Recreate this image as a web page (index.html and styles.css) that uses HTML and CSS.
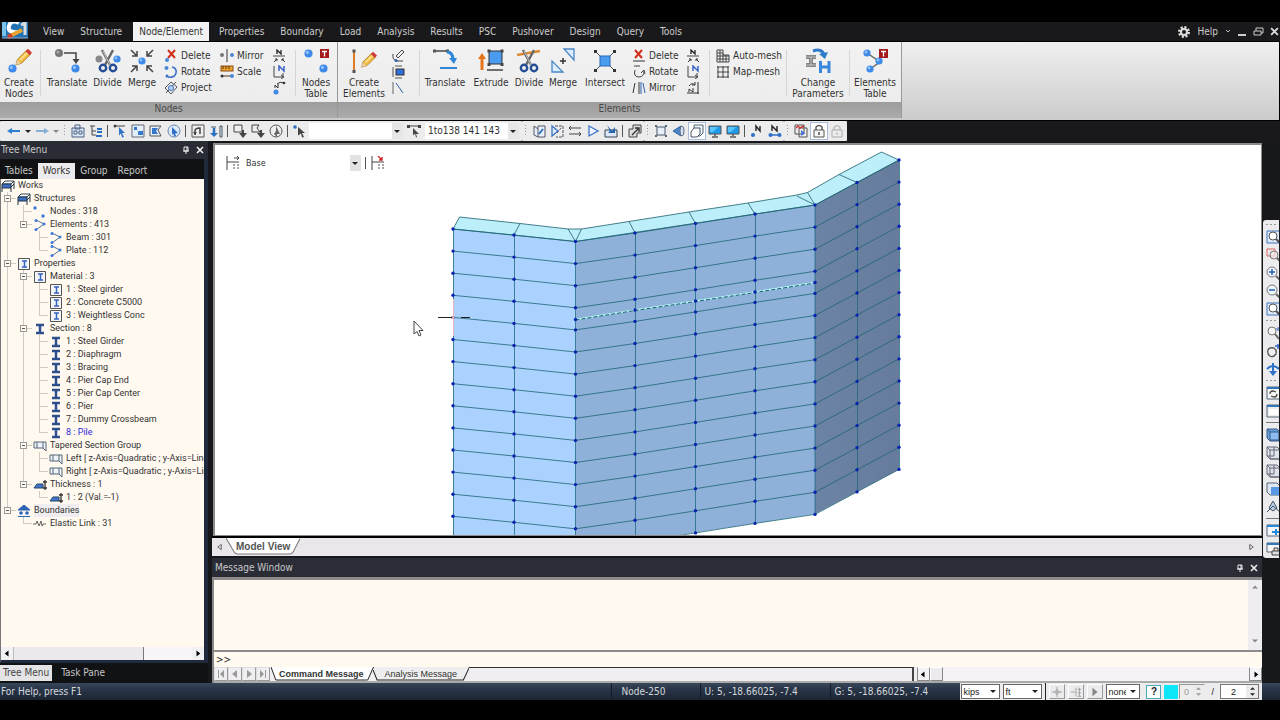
FILE: index.html
```html
<!DOCTYPE html>
<html lang="en">
<head>
<meta charset="utf-8">
<title>Model View</title>
<link rel="stylesheet" href="styles.css">
</head>
<body>
<svg class="defs" aria-hidden="true">
  <symbol id="pencil" viewBox="0 0 26 26"><path d="M8 14L19 3l5 5-11 11-7 2z" fill="#f0b93f" stroke="#a8752a"/><path d="M11 15L21 5" stroke="#ffe08a" stroke-width="2.500"/><path d="M18 4l3-3 5 5-3 3z" fill="#cf3b36"/><path d="M6 21l2-6 4 4z" fill="#e9d3a5"/></symbol>
  <symbol id="ball" viewBox="0 0 8 8"><circle cx="4" cy="4" r="3.6" fill="#3f8ae8"/><circle cx="3" cy="3" r="1.4" fill="#8fc2ff"/></symbol>
  <symbol id="create-n" viewBox="0 0 26 26"><use href="#pencil" x="5" y="0" width="21" height="21"/><use href="#ball" x="2" y="16" width="9" height="9"/></symbol>
  <symbol id="translate-n" viewBox="0 0 26 26"><circle cx="5" cy="5" r="4" fill="#777"/><circle cx="4" cy="4" r="1.5" fill="#aaa"/><path d="M10 5h12v7" fill="none" stroke="#444" stroke-width="1.500"/><path d="M18.500 11h7L22 16z" fill="#444"/><use href="#ball" x="17" y="16" width="9" height="9"/></symbol>
  <symbol id="scissors" viewBox="0 0 26 26"><path d="M7 2l8 15M18 2l-8 15" stroke="#666" stroke-width="2.4"/><path d="M8 3l7 14" stroke="#ccc"/><circle cx="8" cy="20" r="3.2" fill="none" stroke="#244f94" stroke-width="2.4"/><circle cx="18" cy="20" r="3.2" fill="none" stroke="#244f94" stroke-width="2.4"/></symbol>
  <symbol id="divide-n" viewBox="0 0 26 26"><circle cx="4" cy="11" r="3.5" fill="#888"/><use href="#ball" x="18" y="7" width="8" height="8"/><use href="#scissors" width="26" height="26"/></symbol>
  <symbol id="merge-n" viewBox="0 0 26 26"><g fill="none" stroke="#444" stroke-width="1.5"><path id="arr" d="M2 2l6 6M8 3v5H3"/><use href="#arr" transform="translate(26 0) scale(-1 1)"/><use href="#arr" transform="translate(0 26) scale(1 -1)"/><use href="#arr" transform="translate(26 26) scale(-1 -1)"/></g><use href="#ball" x="9" y="9" width="8" height="8"/></symbol>
  <symbol id="tbadge" viewBox="0 0 9 9"><rect width="9" height="9" fill="#a51b1b"/><path d="M2 2.5h5M4.500 2.500v5" stroke="#fff" stroke-width="1.300"/></symbol>
  <symbol id="table-n" viewBox="0 0 26 26"><use href="#ball" x="1" y="1" width="9" height="9"/><use href="#ball" x="16" y="16" width="9" height="9"/><use href="#tbadge" x="17" y="1" width="9" height="9"/></symbol>
  <symbol id="create-e" viewBox="0 0 26 26"><path d="M3 3v20" stroke="#de7c24" stroke-width="2"/><path d="M1.500 1.500h3v3h-3zM1.500 22h3v3h-3z" fill="#555"/><use href="#pencil" x="6" y="2" width="20" height="22"/></symbol>
  <symbol id="translate-e" viewBox="0 0 26 26"><path d="M2 3h14" stroke="#444" stroke-width="1.500"/><path d="M1 1.500h3v3H1zM14 1.500h3v3h-3z" fill="#555"/><path d="M15 4q6 0 6 8" fill="none" stroke="#2e86d8" stroke-width="3"/><path d="M17 10l5 6 3-6z" fill="#2e86d8"/><path d="M8 20h17" stroke="#2e86d8" stroke-width="2"/></symbol>
  <symbol id="extrude" viewBox="0 0 26 26"><path d="M4 22V10" stroke="#e5751b" stroke-width="3"/><path d="M0 11l4-6 4 6z" fill="#e5751b"/><rect x="11" y="3" width="13" height="13" fill="#4a9cf0" stroke="#333"/><path d="M9 22h16" stroke="#444" stroke-width="1.500"/><path d="M9.500 1.500h3v3h-3zM22.500 1.500h3v3h-3zM9.500 15h3v3h-3zM22.500 15h3v3h-3z" fill="#444"/></symbol>
  <symbol id="divide-e" viewBox="0 0 26 26"><path d="M1 7l23-4" stroke="#de8a34" stroke-width="2.500"/><use href="#scissors" width="26" height="26"/></symbol>
  <symbol id="merge-e" viewBox="0 0 26 26"><path d="M14 1h10v11zM2 13v11h11z" fill="#dcecff" stroke="#4b86c6" stroke-width="1.300"/><path d="M10 13h6M13 10v6" stroke="#333" stroke-width="1.500"/></symbol>
  <symbol id="intersect" viewBox="0 0 26 26"><path d="M3 3l20 20M23 3L3 23" stroke="#555"/><rect x="8" y="8" width="10" height="10" fill="#4a9cf0" stroke="#2464b8"/><path d="M2 2h3v3H2zM21 2h3v3h-3zM2 21h3v3H2zM21 21h3v3h-3z" fill="#333"/></symbol>
  <symbol id="change" viewBox="0 0 26 26"><path d="M1 9h10M6 9v8M1 17h10" stroke="#666" stroke-width="3.500"/><path d="M1 9h10M6 9v8M1 17h10" stroke="#ddd"/><path d="M15.500 13v12M24 13v12M15.500 19H24" stroke="#3986dd" stroke-width="3"/><path d="M8 3q9-3 11 4" fill="none" stroke="#2e7bc8" stroke-width="3"/><path d="M14 6l6 5 3-7z" fill="#2e7bc8"/></symbol>
  <symbol id="table-e" viewBox="0 0 26 26"><path d="M5 5l13 9L8 21" stroke="#666" stroke-width="1.500" fill="none"/><use href="#ball" x="1" y="1" width="8" height="8"/><use href="#ball" x="13" y="9" width="8" height="8"/><use href="#ball" x="4" y="17" width="8" height="8"/><use href="#tbadge" x="17" y="1" width="9" height="9"/></symbol>

  <symbol id="del" viewBox="0 0 14 14"><path d="M4 1l7 8M11 1L4 9" stroke="#d22f1e" stroke-width="2"/><circle cx="3" cy="11" r="2" fill="#4a86d8"/></symbol>
  <symbol id="del-e" viewBox="0 0 14 14"><path d="M3 1l7 8M10 1L3 9" stroke="#d22f1e" stroke-width="2"/><path d="M1 12h12" stroke="#333"/></symbol>
  <symbol id="rot" viewBox="0 0 14 14"><path d="M8 2q5 1 4 6t-8 4" fill="none" stroke="#3a6fc9" stroke-width="1.500"/><circle cx="2.500" cy="3" r="2" fill="#4a86d8"/><circle cx="3" cy="11" r="1.500" fill="#3a6fc9"/></symbol>
  <symbol id="rot-e" viewBox="0 0 14 14"><path d="M2 1h6M3 5q-2 7 4 7 5 0 5-6M9 8l3-3 1 4" fill="none" stroke="#444"/></symbol>
  <symbol id="proj" viewBox="0 0 14 14"><path d="M7 1l6 5-6 7-6-6zM2 12L12 1" fill="none" stroke="#555"/><circle cx="7" cy="7" r="2.500" fill="#bcd5f5" stroke="#3a6fc9"/></symbol>
  <symbol id="mir" viewBox="0 0 14 14"><path d="M7 0v13" stroke="#333"/><circle cx="2" cy="6" r="2" fill="#777"/><circle cx="12" cy="6" r="2" fill="#4a86d8"/></symbol>
  <symbol id="mir-e" viewBox="0 0 14 14"><path d="M3 2L1 12M7 1v12" stroke="#333"/><path d="M9 1v12M11 2l2 10" stroke="#2e5fae"/></symbol>
  <symbol id="scale" viewBox="0 0 14 14"><rect x="1" y="1" width="12" height="5" fill="#eda12b" stroke="#8b4e14"/><path d="M3 1v3M6 1v3M9 1v3M1 11h12" stroke="#553311"/><circle cx="2" cy="11" r="1.500" fill="#333"/><circle cx="12" cy="11" r="2" fill="#4a86d8"/></symbol>
  <symbol id="num1" viewBox="0 0 14 14"><path d="M5 5V1l4 4V1" fill="none" stroke="#222" stroke-width="1.300"/><path d="M1 7h12" stroke="#444"/><path d="M2 13l3-3M3 10h2v2M13 13l-3-3M12 10h-2v2" stroke="#333" fill="none"/></symbol>
  <symbol id="num2" viewBox="0 0 14 14"><path d="M2 1v11h9M9 10l3 2-3 2M11 12V8" fill="none" stroke="#444"/><path d="M7 6V1l5 5V1" fill="none" stroke="#3b63c8" stroke-width="1.500"/></symbol>
  <symbol id="num3" viewBox="0 0 14 14"><path d="M3 7V4l3 3V3M5 3q3-3 7-1" fill="none" stroke="#333"/><circle cx="4" cy="11" r="2.500" fill="#3f8ae8"/><circle cx="12" cy="2" r="1.300" fill="#333"/></symbol>
  <symbol id="num4" viewBox="0 0 14 14"><path d="M12 1v12M1 12h12M3 11V8l4 3V7M3 5q3-4 6-1M9 1v3H6" fill="none" stroke="#333"/></symbol>
  <symbol id="ce1" viewBox="0 0 14 14"><path d="M2 5q-1 6 4 7h6M5 7l6-6 2 2-6 6z" fill="none" stroke="#444"/><circle cx="5" cy="11.500" r="1.500" fill="#2e5fae"/></symbol>
  <symbol id="ce2" viewBox="0 0 14 14"><rect x="5" y="4" width="8" height="6" fill="#2f6fd8" stroke="#333"/><path d="M2 2v10M4 1h7M4 13h7" stroke="#555"/></symbol>
  <symbol id="ce3" viewBox="0 0 14 14"><path d="M2 1v12" stroke="#666"/><path d="M5 2l7 10" stroke="#2e5fae"/></symbol>
  <symbol id="mesh1" viewBox="0 0 14 14"><path d="M1 1h6v5h6v7H1zM1 4h6M1 7h12M1 10h12M4 1v12M7 5v8M10 6v7" fill="none" stroke="#444"/></symbol>
  <symbol id="mesh2" viewBox="0 0 14 14"><path d="M2 1v12M7 1v12M12 1v12M1 2h12M1 7h12M1 12h12" fill="none" stroke="#444"/></symbol>

  <symbol id="back" viewBox="0 0 14 14"><path d="M3 7h10" stroke="#2c7fd1" stroke-width="2"/><path d="M0 7l5-3v6z" fill="#2c7fd1"/></symbol>
  <symbol id="fwd" viewBox="0 0 14 14"><path d="M1 7h10" stroke="#87aed6" stroke-width="2"/><path d="M14 7L9 4v6z" fill="#87aed6"/></symbol>
  <symbol id="g-group" viewBox="0 0 14 14"><path d="M1 4h12v9H1zM4 1h5v4H4zM3 7h3v3H3zM8 7h3v3H8z" fill="#dfeaf8" stroke="#4a5f80"/></symbol>
  <symbol id="g-tree" viewBox="0 0 14 14"><path d="M1 2h5M3 2v9h4M3 7h4" fill="none" stroke="#444"/><path d="M8 5h5M8 8h5M7 12h6" stroke="#2c6fc1" stroke-width="2"/></symbol>
  <symbol id="g-pick" viewBox="0 0 14 14"><path d="M1 2h11" stroke="#444"/><path d="M6 3l6 6H9l2 4-2 .5-1-4-2 2z" fill="#2f74c8"/><circle cx="2" cy="2" r="1.500" fill="#444"/></symbol>
  <symbol id="g-win" viewBox="0 0 14 14"><path d="M1 1h12v12H1z" fill="#e6f0fc" stroke="#667"/><path d="M3 3h3v3H3zM6 6l5 5H7V8z" fill="#3578cb"/><path d="M8 7h4v4H8z" fill="#3578cb"/></symbol>
  <symbol id="g-poly" viewBox="0 0 14 14"><path d="M1 2h11L9 6l3 6H1z" fill="#e6f0fc" stroke="#555"/><path d="M3 4h6L7 7l2 3H3z" fill="#3578cb"/></symbol>
  <symbol id="g-circ" viewBox="0 0 14 14"><circle cx="7" cy="7" r="6" fill="#dceafa" stroke="#6a86ae"/><path d="M5 3l6 6-3 .4L9 12l-2 .3-.4-2.500-1.600 1z" fill="#2f6fc4"/></symbol>
  <symbol id="g-un" viewBox="0 0 14 14"><path d="M1 1h12v12H1z" fill="#eee" stroke="#555"/><path d="M4 11V7q0-3 5-3v6" fill="none" stroke="#444" stroke-width="1.500"/><path d="M2 8h4l-2 3z" fill="#444"/></symbol>
  <symbol id="g-down" viewBox="0 0 14 14"><path d="M2 3h5M11 2h2v11h-2z" fill="none" stroke="#456"/><path d="M5 4v6" stroke="#2c6fc1" stroke-width="2.500"/><path d="M1 9l4 4 4-4z" fill="#2c6fc1"/></symbol>
  <symbol id="g-act" viewBox="0 0 14 14"><path d="M1 1h8v7H1z" fill="#eee" stroke="#444"/><path d="M10 6v4" stroke="#444" stroke-width="2"/><path d="M6 9l4 5 4-5z" fill="#444"/></symbol>
  <symbol id="g-act2" viewBox="0 0 14 14"><path d="M1 1h7L6 4l3 4H1z" fill="#eee" stroke="#444"/><path d="M10 6v4" stroke="#444" stroke-width="2"/><path d="M6 9l4 5 4-5z" fill="#444"/></symbol>
  <symbol id="g-cgray" viewBox="0 0 14 14"><circle cx="7" cy="7" r="6" fill="#eee" stroke="#555"/><path d="M7 2l4 8H8v3l-3-3 2-3z" fill="#666"/></symbol>
  <symbol id="g-cur" viewBox="0 0 14 14"><circle cx="2" cy="3" r="1.800" fill="#2c6fc1"/><path d="M5 3l7 6H9l2 4-2 .5-1-4-3 2z" fill="#444"/></symbol>
  <symbol id="g-curline" viewBox="0 0 14 14"><path d="M1 2h12" stroke="#444"/><path d="M0 1h3v3H0zM11 1h3v3h-3z" fill="#444"/><path d="M6 4l6 6H9l1 3-1 .5-1-4-2 2z" fill="#444"/></symbol>
  <symbol id="s-face" viewBox="0 0 14 14"><path d="M2 2l4 3v8l-4-2zM6 5V2h7v11H6" fill="#e8f1fc" stroke="#556"/><path d="M7 10l4-5" stroke="#2c6fc1" stroke-width="2"/></symbol>
  <symbol id="s-vol" viewBox="0 0 14 14"><path d="M2 2v10l6-5z" fill="#dfeafa" stroke="#3d74c6" stroke-width="1.300"/><path d="M5 2h8v11H6M7 9l4-5" fill="none" stroke="#556" stroke-dasharray="3 1"/></symbol>
  <symbol id="s-tri" viewBox="0 0 14 14"><path d="M3 2l9 5-9 5z" fill="#edf4fd" stroke="#3d74c6" stroke-width="1.300"/></symbol>
  <symbol id="s-line" viewBox="0 0 14 14"><path d="M1 4h12M1 10h12M3 2L1 4l2 2M11 8l2 2-2 2" fill="none" stroke="#444"/></symbol>
  <symbol id="s-save" viewBox="0 0 14 14"><path d="M1 6h12v7H1z" fill="#dce8f8" stroke="#345"/><path d="M3 1l5 6 3-4v6H4l2-2z" fill="#2563ae"/></symbol>
  <symbol id="s-pen" viewBox="0 0 14 14"><path d="M1 5h4V1h8v8H9v4H1z" fill="#ddd" stroke="#444"/><path d="M4 11l6-6M7 4h4v4" stroke="#333" fill="none" stroke-width="1.400"/></symbol>
  <symbol id="v-frame" viewBox="0 0 14 14"><path d="M3 3h8v8H3z" fill="#e7f0fb" stroke="#456"/><path d="M1 1h2v2H1zM11 1h2v2h-2zM1 11h2v2H1zM11 11h2v2h-2z" fill="#567"/></symbol>
  <symbol id="v-cone" viewBox="0 0 14 14"><path d="M1 7l8-5v10z" fill="#4c87ce" stroke="#2f609d"/><ellipse cx="10" cy="7" rx="2" ry="5" fill="#cfe1f6" stroke="#667"/></symbol>
  <symbol id="v-sheet" viewBox="0 0 14 14"><path d="M4 1h9v8l-3 3H4z" fill="#eef4fb" stroke="#567"/><path d="M1 8l3-4h6v6l-3 3H1z" fill="#fff" stroke="#456"/></symbol>
  <symbol id="v-mon" viewBox="0 0 14 14"><path d="M1 2h12v8H1z" fill="#1e9bea" stroke="#555"/><path d="M2 3h8l-5 5H2z" fill="#59c3fb"/><path d="M7 10v2M4 13h6" stroke="#555" stroke-width="1.500"/></symbol>
  <symbol id="v-n" viewBox="0 0 14 14"><path d="M6 7V2l4 5V2" fill="none" stroke="#222" stroke-width="1.400"/><circle cx="3" cy="11" r="2" fill="#2e6fc9"/></symbol>
  <symbol id="v-ne" viewBox="0 0 14 14"><path d="M4 7V2l5 5V2" fill="none" stroke="#222" stroke-width="1.400"/><path d="M2 11h10" stroke="#2e6fc9" stroke-width="1.500"/><circle cx="2.500" cy="11" r="2" fill="#2e6fc9"/><circle cx="11.500" cy="11" r="2" fill="#2e6fc9"/></symbol>
  <symbol id="v-doc" viewBox="0 0 14 14"><path d="M1 1h9v9H1zM5 4h8v9H5z" fill="#eee" stroke="#555"/><path d="M2 4l2-2 2 2 4-2" fill="none" stroke="#c33" stroke-width="1.400"/><path d="M7 6l4 3-4 3z" fill="#3f78d8"/></symbol>
  <symbol id="lock" viewBox="0 0 14 14"><path d="M4 6V3q3-3 6 0v3" fill="none" stroke="#555" stroke-width="1.400"/><path d="M2 6h10v7H2z" fill="#f6f6f6" stroke="#555"/><path d="M7 8v3" stroke="#444" stroke-width="1.400"/></symbol>
  <symbol id="lock-off" viewBox="0 0 14 14"><path d="M4 6V3q3-3 6 0v3" fill="none" stroke="#aaa"/><path d="M2 6h10v7H2z" fill="#eee" stroke="#aaa"/><path d="M7 8v3" stroke="#aaa"/></symbol>

  <symbol id="z-fit" viewBox="0 0 14 14"><path d="M1 1h13v12H1z" fill="#dce9f8" stroke="#3f74b8"/><circle cx="7" cy="6" r="4" fill="#fff" stroke="#555"/><path d="M10 9l4 4" stroke="#555" stroke-width="2"/></symbol>
  <symbol id="z-win" viewBox="0 0 14 14"><path d="M1 1h8v7H1z" fill="none" stroke="#d66"/><circle cx="8" cy="7" r="4" fill="#f4eaea" fill-opacity=".7" stroke="#777"/><path d="M11 10l3 3" stroke="#666" stroke-width="2"/></symbol>
  <symbol id="z-in" viewBox="0 0 14 14"><circle cx="6" cy="6" r="5" fill="#eef5ff" stroke="#777"/><path d="M10 10l4 4" stroke="#666" stroke-width="2"/><path d="M3 6h6M6 3v6" stroke="#235fb5" stroke-width="1.500"/></symbol>
  <symbol id="z-out" viewBox="0 0 14 14"><circle cx="6" cy="6" r="5" fill="#eef5ff" stroke="#777"/><path d="M10 10l4 4" stroke="#666" stroke-width="2"/><path d="M3 6h6" stroke="#235fb5" stroke-width="1.500"/></symbol>
  <symbol id="z-dyn" viewBox="0 0 14 14"><circle cx="6" cy="5" r="4" fill="#f5f5f5" stroke="#777"/><path d="M9 8l4 5" stroke="#666" stroke-width="2"/><path d="M10 3h4M12 1v4" stroke="#47c"/></symbol>
  <symbol id="z-pan" viewBox="0 0 14 14"><path d="M2 6q1-3 6-2 3 2 2 6-3 4-6 2-3-2-2-6z" fill="#f1f1f1" stroke="#555" stroke-width="1.300"/><path d="M9 2h5M12 0v5" stroke="#36c" stroke-width="1.500"/></symbol>
  <symbol id="z-rot" viewBox="0 0 14 14"><path d="M1 7q6-6 12 0M7 1v9" fill="none" stroke="#2e74c6" stroke-width="2"/><path d="M3 9l4 5 4-5z" fill="#2e74c6"/></symbol>
  <symbol id="z-redraw" viewBox="0 0 14 14"><path d="M1 1h13v12H1z" fill="#f6f6f6" stroke="#567"/><path d="M1 2h13" stroke="#37b" stroke-width="2"/><path d="M4 8q0-3 3-3l3 1M11 8q0 3-3 3l-3-1" fill="none" stroke="#444" stroke-width="1.300"/></symbol>
  <symbol id="z-page" viewBox="0 0 14 14"><path d="M1 1h13v12H1z" fill="#eee" stroke="#567"/><path d="M1 2h13" stroke="#37b" stroke-width="2"/><path d="M3 5h9v6H3z" fill="#fff"/></symbol>
  <symbol id="cube1" viewBox="0 0 14 14"><path d="M1 1h10l3 3v9H4l-3-3z" fill="#6ba0dc" stroke="#345a85"/><path d="M4 4h9v8H4zM1 1l3 3" fill="#8cbcf0" stroke="#345a85"/></symbol>
  <symbol id="cube2" viewBox="0 0 14 14"><path d="M1 1h10l3 3v9H4l-3-3z" fill="#dfe4ec" stroke="#667"/><path d="M4 4h10v9H4zM1 1l3 3M8 1v9H1" fill="none" stroke="#667"/></symbol>
  <symbol id="cube3" viewBox="0 0 14 14"><path d="M1 1h10l3 3v9H4l-3-3z" fill="#dfe7f1" stroke="#567"/><path d="M5 5h9v8H5z" fill="#5998e4"/></symbol>
  <symbol id="persp" viewBox="0 0 14 14"><path d="M7 1l4 7-4 3-4-3zM7 6l-6 6M7 6l7 6" fill="#b9cde7" stroke="#456"/></symbol>
  <symbol id="z-add" viewBox="0 0 14 14"><path d="M1 1h13v11H1z" fill="#f6f6f6" stroke="#567"/><path d="M1 2h13M6 8h8M10 5v6" stroke="#238bda" stroke-width="2"/></symbol>
  <symbol id="z-lock" viewBox="0 0 14 14"><path d="M1 1h13v9H1z" fill="#f6f6f6" stroke="#567"/><path d="M1 2h13" stroke="#37b" stroke-width="2"/><path d="M6 9h8v4H6zM8 9V6h4v3" fill="#ddd" stroke="#444"/></symbol>

  <symbol id="t-works" viewBox="0 0 14 12"><path d="M1 4l3-3h9l-3 3z" fill="#fff" stroke="#345"/><path d="M1 4h9v4H1z" fill="#3b6fc4" stroke="#234"/><path d="M1 8v4M10 8v4M13 1v8M10 7l3-3" fill="none" stroke="#234"/></symbol>
  <symbol id="t-nodes" viewBox="0 0 14 12"><circle cx="2" cy="2" r="1.700" fill="#3c78d8"/><circle cx="10" cy="10" r="1.700" fill="#3c78d8"/></symbol>
  <symbol id="t-elem" viewBox="0 0 14 12"><path d="M3 1l8 4-8 6" fill="none" stroke="#556f95"/><circle cx="3" cy="1.500" r="1.500" fill="#3c78d8"/><circle cx="11" cy="5" r="1.500" fill="#3c78d8"/><circle cx="3" cy="10.500" r="1.500" fill="#3c78d8"/></symbol>
  <symbol id="t-mat" viewBox="0 0 14 12"><path d="M1.500.5h11v11h-11z" fill="#f3f5f9" stroke="#555"/><path d="M5 3h5M5 9h5M7.500 3v6" stroke="#3564c0" stroke-width="1.500"/></symbol>
  <symbol id="t-sec" viewBox="0 0 14 12"><path d="M3 2h8M3 10h8M7 2v8" stroke="#2d4f8c" stroke-width="2.500"/></symbol>
  <symbol id="t-tap" viewBox="0 0 14 12"><path d="M1 2h12v9l-3-3H1zM10 2v6M4 2v6" fill="#eef4fb" stroke="#567"/></symbol>
  <symbol id="t-thk" viewBox="0 0 14 12"><path d="M1 9l3-4h6v4z" fill="#4177cb" stroke="#246"/><path d="M12 1v10M10 3h4M10 9h4" stroke="#333" stroke-width="1.300"/></symbol>
  <symbol id="t-bnd" viewBox="0 0 14 12"><path d="M7 0l6 5H1zM1 11.500h12" fill="#2f63b5" stroke="#2f63b5"/><circle cx="4" cy="8" r="1.800" fill="#2f63b5"/><circle cx="10" cy="8" r="1.800" fill="#2f63b5"/></symbol>
  <symbol id="t-lnk" viewBox="0 0 14 12"><path d="M0 6h3l1-3 2 5 2-5 1 5 1-2h3" fill="none" stroke="#666"/></symbol>

  <symbol id="pin" viewBox="0 0 8 8"><path d="M2 1h4v4H2zM1 5h6M4 5v3M5 1v4" fill="none" stroke="currentColor"/></symbol>
  <symbol id="x" viewBox="0 0 8 8"><path d="M1 1l6 6M7 1L1 7" stroke="currentColor" stroke-width="1.600"/></symbol>
  <symbol id="tl" viewBox="0 0 8 8"><path d="M6 0v8L1 4z" fill="currentColor"/></symbol>
  <symbol id="tr" viewBox="0 0 8 8"><path d="M2 0v8l5-4z" fill="currentColor"/></symbol>
  <symbol id="tu" viewBox="0 0 8 8"><path d="M0 6h8L4 2z" fill="currentColor"/></symbol>
  <symbol id="td" viewBox="0 0 8 8"><path d="M0 2h8L4 6z" fill="currentColor"/></symbol>
  <symbol id="tlo" viewBox="0 0 8 8"><path d="M6 1v6L2 4z" fill="none" stroke="currentColor"/></symbol>
  <symbol id="tro" viewBox="0 0 8 8"><path d="M2 1v6l4-3z" fill="none" stroke="currentColor"/></symbol>
  <symbol id="tlb" viewBox="0 0 8 8"><path d="M7 0v8L3 4zM1 0h1v8H1z" fill="currentColor"/></symbol>
  <symbol id="trb" viewBox="0 0 8 8"><path d="M1 0v8l4-4zM6 0h1v8H6z" fill="currentColor"/></symbol>
</svg>

<header class="menubar">
  <svg class="logo" viewBox="0 0 28 18" aria-label="Application"><path d="M0 0h26v16H0z" fill="#2173b4"/><path d="M0 0h4v14H0z" fill="#79c3ea"/><path d="M17 1q-8-4-10 3t9 6" fill="none" stroke="#fff" stroke-width="4"/><path d="M19 3l4-2v12" fill="none" stroke="#ddd" stroke-width="3"/><path d="M6 15l14-7" stroke="#e8a62e" stroke-width="4"/><path d="M6 15l4-2" stroke="#d13a28" stroke-width="4"/><path d="M0 16h26" stroke="#9ac" stroke-width="1"/></svg>
  <nav class="menu">
    <button>View</button><button>Structure</button><button class="on">Node/Element</button><button>Properties</button><button>Boundary</button><button>Load</button><button>Analysis</button><button>Results</button><button>PSC</button><button>Pushover</button><button>Design</button><button>Query</button><button>Tools</button>
  </nav>
  <div class="winctl">
    <button aria-label="Settings"><svg width="12" height="12" viewBox="0 0 12 12"><circle cx="6" cy="6" r="4.500" fill="none" stroke="#ddd" stroke-width="3" stroke-dasharray="2 1.500"/><circle cx="6" cy="6" r="3" fill="none" stroke="#ddd" stroke-width="2"/></svg></button>
    <button class="help">Help <svg width="6" height="4" viewBox="0 0 6 4"><path d="M1 0l2 2 2-2" fill="none" stroke="#bbb"/></svg></button>
    <button aria-label="Minimize"><svg width="9" height="10" viewBox="0 0 9 10"><path d="M0 8h8" stroke="#ccc" stroke-width="2"/></svg></button>
    <button aria-label="Restore"><svg width="11" height="10" viewBox="0 0 11 10"><path d="M3 4V1h7v5H8M1 4h7v4H1z" fill="none" stroke="#ccc"/></svg></button>
    <button aria-label="Close"><svg width="9" height="9" class="lt"><use href="#x"/></svg></button>
  </div>
</header>

<section class="ribbon">
  <div class="group g-nodes">
    <div class="tools">
      <button class="big w38"><svg><use href="#create-n"/></svg><span>Create<br>Nodes</span></button>
      <i class="rs"></i>
      <button class="big w48"><svg><use href="#translate-n"/></svg><span>Translate</span></button>
      <button class="big w33"><svg><use href="#divide-n"/></svg><span>Divide</span></button>
      <button class="big w36"><svg><use href="#merge-n"/></svg><span>Merge</span></button>
      <div class="col w60"><button><svg><use href="#del"/></svg>Delete</button><button><svg><use href="#rot"/></svg>Rotate</button><button><svg><use href="#proj"/></svg>Project</button></div>
      <div class="col flush w48"><button><svg><use href="#mir"/></svg>Mirror</button><button><svg><use href="#scale"/></svg>Scale</button></div>
      <div class="col w25"><button aria-label="Renumber"><svg><use href="#num1"/></svg></button><button aria-label="Compact numbering"><svg><use href="#num2"/></svg></button><button aria-label="Start number"><svg><use href="#num3"/></svg></button></div>
      <i class="rs"></i>
      <button class="big w36"><svg><use href="#table-n"/></svg><span>Nodes<br>Table</span></button>
    </div>
    <div class="cap">Nodes</div>
  </div>
  <div class="group g-elems">
    <div class="tools">
      <button class="big w46"><svg><use href="#create-e"/></svg><span>Create<br>Elements</span></button>
      <div class="col w30"><button aria-label="Draw curve"><svg><use href="#ce1"/></svg></button><button aria-label="Convert plates"><svg><use href="#ce2"/></svg></button><button aria-label="Line elements"><svg><use href="#ce3"/></svg></button></div>
      <i class="rs"></i>
      <button class="big w46"><svg><use href="#translate-e"/></svg><span>Translate</span></button>
      <button class="big w46"><svg><use href="#extrude"/></svg><span>Extrude</span></button>
      <button class="big w30"><svg><use href="#divide-e"/></svg><span>Divide</span></button>
      <button class="big w38"><svg><use href="#merge-e"/></svg><span>Merge</span></button>
      <button class="big w46"><svg><use href="#intersect"/></svg><span>Intersect</span></button>
      <div class="col w54"><button><svg><use href="#del-e"/></svg>Delete</button><button><svg><use href="#rot-e"/></svg>Rotate</button><button><svg><use href="#mir-e"/></svg>Mirror</button></div>
      <div class="col w25"><button aria-label="Renumber"><svg><use href="#num1"/></svg></button><button aria-label="Compact numbering"><svg><use href="#num2"/></svg></button><button aria-label="Start number"><svg><use href="#num4"/></svg></button></div>
      <i class="rs"></i>
      <div class="col w72"><button><svg><use href="#mesh1"/></svg>Auto-mesh</button><button><svg><use href="#mesh2"/></svg>Map-mesh</button></div>
      <i class="rs"></i>
      <button class="big w58"><svg><use href="#change"/></svg><span>Change<br>Parameters</span></button>
      <i class="rs"></i>
      <button class="big w46"><svg><use href="#table-e"/></svg><span>Elements<br>Table</span></button>
    </div>
    <div class="cap">Elements</div>
  </div>
</section>

<section class="toolbar">
  <div class="bar">
    <button aria-label="Undo"><svg><use href="#back"/></svg></button><i class="car"></i>
    <button aria-label="Redo"><svg><use href="#fwd"/></svg></button><i class="car dim"></i>
    <i class="grip"></i>
    <button aria-label="Groups"><svg><use href="#g-group"/></svg></button><button aria-label="Works tree"><svg><use href="#g-tree"/></svg></button><i class="sep"></i>
    <button aria-label="Select single"><svg><use href="#g-pick"/></svg></button><button aria-label="Select window"><svg><use href="#g-win"/></svg></button><button aria-label="Select polygon"><svg><use href="#g-poly"/></svg></button><button aria-label="Select circle"><svg><use href="#g-circ"/></svg></button><i class="sep"></i>
    <button aria-label="Select previous"><svg><use href="#g-un"/></svg></button><button aria-label="Select recent"><svg><use href="#g-down"/></svg></button><i class="sep"></i>
    <button aria-label="Activate"><svg><use href="#g-act"/></svg></button><button aria-label="Inverse activate"><svg><use href="#g-act2"/></svg></button><button aria-label="Activate all"><svg><use href="#g-cgray"/></svg></button><i class="sep"></i>
    <button aria-label="Select nodes"><svg><use href="#g-cur"/></svg></button>
    <label class="combo"><select aria-label="Node list"><option></option></select></label>
    <button class="mid" aria-label="Select elements"><svg><use href="#g-curline"/></svg></button>
    <label class="combo"><select aria-label="Element list"><option>1to138 141 143</option></select></label>
  </div>
  <div class="bar">
    <i class="grip"></i>
    <button aria-label="Plane view"><svg><use href="#s-face"/></svg></button><button aria-label="Volume view"><svg><use href="#s-vol"/></svg></button><button aria-label="Lines"><svg><use href="#s-line"/></svg></button><button aria-label="Plates"><svg><use href="#s-tri"/></svg></button><button aria-label="Store"><svg><use href="#s-save"/></svg></button><i class="sep"></i><button aria-label="Edit"><svg><use href="#s-pen"/></svg></button>
  </div>
  <div class="bar">
    <i class="grip"></i>
    <button aria-label="Shrink"><svg><use href="#v-frame"/></svg></button><button aria-label="Perspective"><svg><use href="#v-cone"/></svg></button><button class="sel" aria-label="Hidden"><svg><use href="#v-sheet"/></svg></button><button aria-label="Display"><svg><use href="#v-mon"/></svg></button><button aria-label="Display options"><svg><use href="#v-mon"/></svg></button><i class="sep"></i><button aria-label="Node number"><svg><use href="#v-n"/></svg></button><button aria-label="Element number"><svg><use href="#v-ne"/></svg></button>
  </div>
  <div class="bar">
    <i class="grip"></i>
    <button aria-label="Results mode"><svg><use href="#v-doc"/></svg></button><button class="sel" aria-label="Lock"><svg><use href="#lock"/></svg></button><button disabled aria-label="Unlock"><svg><use href="#lock-off"/></svg></button>
  </div>
</section>

<main class="work">
  <aside class="left">
    <div class="title"><span>Tree Menu</span><button aria-label="Pin"><svg><use href="#pin"/></svg></button><button aria-label="Close"><svg><use href="#x"/></svg></button></div>
    <div class="ltabs"><button>Tables</button><button class="on">Works</button><button>Group</button><button>Report</button></div>
    <div class="treebox">
      <div class="treewrap">
      <div class="row root"><svg><use href="#t-works"/></svg><span>Works</span></div>
      <ul class="tree">
        <li><div class="row"><button class="tg" aria-label="Collapse"></button><svg><use href="#t-works"/></svg><span>Structures</span></div>
          <ul>
            <li><div class="row"><svg><use href="#t-nodes"/></svg><span>Nodes : 318</span></div></li>
            <li><div class="row"><button class="tg" aria-label="Collapse"></button><svg><use href="#t-elem"/></svg><span>Elements : 413</span></div>
              <ul>
                <li><div class="row"><svg><use href="#t-elem"/></svg><span>Beam : 301</span></div></li>
                <li><div class="row"><svg><use href="#t-elem"/></svg><span>Plate : 112</span></div></li>
              </ul></li>
          </ul></li>
        <li><div class="row"><button class="tg" aria-label="Collapse"></button><svg><use href="#t-mat"/></svg><span>Properties</span></div>
          <ul>
            <li><div class="row"><button class="tg" aria-label="Collapse"></button><svg><use href="#t-mat"/></svg><span>Material : 3</span></div>
              <ul>
                <li><div class="row"><svg><use href="#t-mat"/></svg><span>1 : Steel girder</span></div></li>
                <li><div class="row"><svg><use href="#t-mat"/></svg><span>2 : Concrete C5000</span></div></li>
                <li><div class="row"><svg><use href="#t-mat"/></svg><span>3 : Weightless Conc</span></div></li>
              </ul></li>
            <li><div class="row"><button class="tg" aria-label="Collapse"></button><svg><use href="#t-sec"/></svg><span>Section : 8</span></div>
              <ul>
                <li><div class="row"><svg><use href="#t-sec"/></svg><span>1 : Steel Girder</span></div></li>
                <li><div class="row"><svg><use href="#t-sec"/></svg><span>2 : Diaphragm</span></div></li>
                <li><div class="row"><svg><use href="#t-sec"/></svg><span>3 : Bracing</span></div></li>
                <li><div class="row"><svg><use href="#t-sec"/></svg><span>4 : Pier Cap End</span></div></li>
                <li><div class="row"><svg><use href="#t-sec"/></svg><span>5 : Pier Cap Center</span></div></li>
                <li><div class="row"><svg><use href="#t-sec"/></svg><span>6 : Pier</span></div></li>
                <li><div class="row"><svg><use href="#t-sec"/></svg><span>7 : Dummy Crossbeam</span></div></li>
                <li><div class="row blue"><svg><use href="#t-sec"/></svg><span>8 : Pile</span></div></li>
              </ul></li>
            <li><div class="row"><button class="tg" aria-label="Collapse"></button><svg><use href="#t-tap"/></svg><span>Tapered Section Group</span></div>
              <ul>
                <li><div class="row"><svg><use href="#t-tap"/></svg><span>Left [ z-Axis=Quadratic ; y-Axis=Linear ]</span></div></li>
                <li><div class="row"><svg><use href="#t-tap"/></svg><span>Right [ z-Axis=Quadratic ; y-Axis=Linear ]</span></div></li>
              </ul></li>
            <li><div class="row"><button class="tg" aria-label="Collapse"></button><svg><use href="#t-thk"/></svg><span>Thickness : 1</span></div>
              <ul>
                <li><div class="row"><svg><use href="#t-thk"/></svg><span>1 : 2 (Val.=-1)</span></div></li>
              </ul></li>
          </ul></li>
        <li><div class="row hl"><button class="tg" aria-label="Collapse"></button><svg><use href="#t-bnd"/></svg><span>Boundaries</span></div>
          <ul>
            <li><div class="row"><svg><use href="#t-lnk"/></svg><span>Elastic Link : 31</span></div></li>
          </ul></li>
      </ul>
      </div>
      <div class="hscroll"><button aria-label="Scroll left"><svg><use href="#tl"/></svg></button><i class="thumb"></i><i class="track"></i><button aria-label="Scroll right"><svg><use href="#tr"/></svg></button></div>
    </div>
    <div class="btabs"><button class="on">Tree Menu</button><button>Task Pane</button></div>
  </aside>

  <section class="center">
    <div class="view">
      <svg class="model" viewBox="215 145 1046 390" preserveAspectRatio="xMinYMin meet" role="img" aria-label="Finite element model">
        <defs>
          <polyline id="rowline" points="453,229 514,235 575.500,241.500 635,233 695.500,223.500 755,214 815,205 857,182.500 899,160"/>
          <g id="dots"><circle cx="453" cy="229" r="1.700"/><circle cx="514" cy="235" r="1.700"/><circle cx="575.500" cy="241.500" r="1.700"/><circle cx="635" cy="233" r="1.700"/><circle cx="695.500" cy="223.500" r="1.700"/><circle cx="755" cy="214" r="1.700"/><circle cx="815" cy="205" r="1.700"/><circle cx="857" cy="182.500" r="1.700"/><circle cx="899" cy="160" r="1.700"/></g>
          <g id="r"><use href="#rowline" fill="none" stroke="#1c6474" stroke-width=".8"/><use href="#dots" fill="#0a22b0"/></g>
          <linearGradient id="side" x1="0" x2="1" y1="0" y2="0"><stop offset="0" stop-color="#6b83a5"/><stop offset="1" stop-color="#677c9c"/></linearGradient>
        </defs>
        <path d="M453 229L575.500 241.500V551L453 538z" fill="#abd2ff"/>
        <path d="M575.500 241.500L815 205V514L575.500 551z" fill="#8fb1d9"/>
        <path d="M815 205L899 160V469.500L815 514z" fill="url(#side)"/>
        <path d="M453 229L459.500 217 520 223.500 568 229 581.500 229 629 221.500 689 212 748 203 797 195 807.500 192.500 839 174.500 881.500 152 899 160 857 182.500 815 205 575.500 241.500z" fill="#bdeffb" stroke="#1c5f6b" stroke-width=".8"/>
        <path d="M514 235l6-11.500M575.500 241.500L568 229M575.500 241.500l6-12.500M635 233l-6-11.500M695.500 223.500L689 212M755 214l-7-11M815 205l-18-9M815 205l-7.500-12.500M857 182.500L839 174.500" fill="none" stroke="#1c5f6b" stroke-width=".8"/>
        <path d="M453.500 229v309M514.500 235v309M575.500 241.500v309M635.500 233v309M695.500 223.500V533M755.500 214v309M815 205v309M857.500 182.500v309M899.500 160v309" stroke="#1d6b80" stroke-width=".8"/>
        <use href="#r"/><use href="#r" y="22.100"/><use href="#r" y="44.200"/><use href="#r" y="66.300"/><use href="#r" y="88.400"/><use href="#r" y="110.500"/><use href="#r" y="132.600"/><use href="#r" y="154.700"/><use href="#r" y="176.800"/><use href="#r" y="198.900"/><use href="#r" y="221"/><use href="#r" y="243.100"/><use href="#r" y="265.200"/><use href="#r" y="287.300"/><use href="#r" y="309.400"/>
        <path d="M575.500 319.500L635 310 695.500 301 755 292 815 282.500" fill="none" stroke="#b8f4f4" stroke-width="1.600"/>
        <path d="M575.500 320L635 310.500 695.500 301.500 755 292.500 815 283" fill="none" stroke="#14626c" stroke-dasharray="4 2"/>
        <g fill="#0a22b0"><circle cx="575.500" cy="319.500" r="1.700"/><circle cx="635" cy="310" r="1.700"/><circle cx="695.500" cy="301" r="1.700"/><circle cx="755" cy="292" r="1.700"/><circle cx="815" cy="282.500" r="1.700"/></g>
        <path d="M453.500 299v37" stroke="#efb4c4"/><circle cx="453" cy="317.500" r="1.500" fill="#e8a9a9"/>
        <path d="M438 317.500h14M461 317.500h9" stroke="#222"/>
        <path d="M414 321v13l3-2.500 2 4.500 2-1-2-4.500h4z" fill="#fff" stroke="#444"/>
      </svg>
      <div class="stage">
        <svg viewBox="0 0 14 14"><path d="M1 0v14M1 6h12M8 2h5M11 0l2 2-2 2" fill="none" stroke="#444"/><path d="M8 8v6M12 8v6" stroke="#555" stroke-dasharray="2 1"/></svg>
        <label class="combo base"><select aria-label="Construction stage"><option>Base</option></select></label>
        <i class="sep"></i>
        <button aria-label="Define stage"><svg viewBox="0 0 14 14"><path d="M1 0v14M1 6h12" fill="none" stroke="#444"/><path d="M7 0l4 4M11 1v3H8" stroke="#c22" fill="none" stroke-width="1.300"/><path d="M8 8v6M12 8v6" stroke="#555" stroke-dasharray="2 1"/></svg></button>
      </div>
    </div>
    <div class="vtabs"><button aria-label="Previous"><svg><use href="#tlo"/></svg></button><button class="vtab"><svg class="shape" viewBox="0 0 74 16" preserveAspectRatio="none"><path d="M0 0l8 13q1 2 3 2h53q2 0 3-2l7-13" fill="#fff" stroke="#777"/></svg><span>Model View</span></button><i class="grow"></i><button aria-label="Next"><svg><use href="#tro"/></svg></button></div>
    <div class="title msgt"><span>Message Window</span><button aria-label="Pin"><svg><use href="#pin"/></svg></button><button aria-label="Close"><svg><use href="#x"/></svg></button></div>
    <div class="msg">
      <div class="log"><div class="vscroll"><svg><use href="#tu"/></svg><svg><use href="#td"/></svg></div></div>
      <label class="cmd"><span>&gt;&gt;</span><input type="text" aria-label="Command"></label>
      <div class="mtabs">
        <div class="nav"><button aria-label="First"><svg><use href="#tlb"/></svg></button><button aria-label="Previous"><svg><use href="#tl"/></svg></button><button aria-label="Next"><svg><use href="#tr"/></svg></button><button aria-label="Last"><svg><use href="#trb"/></svg></button></div>
        <button class="mt on"><svg class="shape" viewBox="0 0 106 14" preserveAspectRatio="none"><path d="M0 0l5 13h95l6-13" fill="#fff" stroke="#222"/></svg><span>Command Message</span></button>
        <button class="mt"><svg class="shape" viewBox="0 0 94 14" preserveAspectRatio="none"><path d="M0 3l4 10h84l6-13" fill="#eee" stroke="#222"/></svg><span>Analysis Message</span></button>
        <i class="rest"></i>
        <div class="hs2"><button aria-label="Scroll left"><svg><use href="#tl"/></svg></button><i class="th2"></i><i class="grow"></i><button aria-label="Scroll right"><svg><use href="#tr"/></svg></button></div>
      </div>
    </div>
  </section>

  <aside class="right">
    <div class="vbar">
      <i class="hgrip"></i>
      <button aria-label="Zoom fit"><svg><use href="#z-fit"/></svg></button><button aria-label="Zoom window"><svg><use href="#z-win"/></svg></button><button aria-label="Zoom in"><svg><use href="#z-in"/></svg></button><button aria-label="Zoom out"><svg><use href="#z-out"/></svg></button><button aria-label="Auto fit"><svg><use href="#z-fit"/></svg></button>
      <i class="hgrip"></i>
      <button aria-label="Dynamic zoom"><svg><use href="#z-dyn"/></svg></button><button aria-label="Pan"><svg><use href="#z-pan"/></svg></button><button aria-label="Rotate"><svg><use href="#z-rot"/></svg></button>
      <i class="hgrip"></i>
      <button aria-label="Redraw"><svg><use href="#z-redraw"/></svg></button><button aria-label="Initial view"><svg><use href="#z-page"/></svg></button>
      <i class="hsep"></i>
      <button aria-label="Iso view"><svg><use href="#cube1"/></svg></button><button aria-label="Top view"><svg><use href="#cube2"/></svg></button><button aria-label="Left view"><svg><use href="#cube2"/></svg></button><button aria-label="Front view"><svg><use href="#cube3"/></svg></button><button aria-label="Angle view"><svg><use href="#persp"/></svg></button>
      <i class="hsep"></i>
      <button aria-label="Add view"><svg><use href="#z-add"/></svg></button><button aria-label="Named view"><svg><use href="#z-lock"/></svg></button>
    </div>
  </aside>
</main>

<footer class="status">
  <span class="hint">For Help, press F1</span>
  <span class="cell c1">Node-250</span>
  <span class="cell c2">U: 5, -18.66025, -7.4</span>
  <span class="cell c2">G: 5, -18.66025, -7.4</span>
  <div class="units">
    <label class="combo u"><select aria-label="Force unit"><option>kips</option></select></label>
    <label class="combo u"><select aria-label="Length unit"><option>ft</option></select></label>
    <i class="usep"></i>
    <button class="ub" aria-label="Snap"><svg viewBox="0 0 14 14"><path d="M7 1v12M1 7h12M7 4l3 3-3 3-3-3z" fill="#eee" stroke="#999"/></svg></button>
    <button class="ub" aria-label="Grid"><svg viewBox="0 0 14 14"><path d="M1 7h5M7 2v10M9 4h4M9 8h4M9 12h4M11 2v10" fill="none" stroke="#999"/></svg></button>
    <button class="ub" aria-label="Run"><svg viewBox="0 0 14 14"><path d="M4 2v10l6-5z" fill="#888"/></svg></button>
    <label class="combo u n"><select aria-label="Filter"><option>none</option></select></label>
    <button class="q">?</button>
    <button class="cy" aria-label="Colour"></button>
    <label class="spin off"><input type="text" value="0" aria-label="Current step" disabled><span><svg><use href="#tu"/></svg><svg><use href="#td"/></svg></span></label>
    <span class="slash">/</span>
    <label class="spin two"><input type="text" value="2" aria-label="Steps"><span><svg><use href="#tu"/></svg><svg><use href="#td"/></svg></span></label>
  </div>
</footer>
</body>
</html>
```
FILE: styles.css
```css
* { box-sizing: border-box; }
body {
  margin: 0;
  min-height: 100vh;
  padding: 22px 0 20px;
  background: #000;
  display: flex;
  flex-direction: column;
  font: 10px/12px "DejaVu Sans Condensed", "Noto Sans", sans-serif;
  color: #333;
  overflow: hidden;
}
button, select, input { font: inherit; color: inherit; border: 0; padding: 0; margin: 0; background: none; border-radius: 0; }
button { display: flex; align-items: center; justify-content: center; white-space: nowrap; }
svg { display: block; flex: none; }
.defs { position: absolute; width: 0; height: 0; }
.grow { flex: 1; }

/* menu bar */
.menubar { height: 20px; background: #19191b; display: flex; color: #ccc; border-bottom: 1px solid #000; }
.logo { width: 35px; height: 18px; padding: 0 5px 0 2px; }
.menu { display: flex; flex: 1; }
.menu button { padding: 0 8px; }
.menu button.on { background: #f2f2f2; color: #333; padding: 0 6px; margin: 0 2px 0 3px; }
.winctl { display: flex; align-items: center; gap: 6px; padding-right: 1px; }
.winctl .help { gap: 7px; padding: 0 1px; }
.lt { color: #ddd; }

/* ribbon */
.ribbon { height: 78px; display: flex; background: linear-gradient(#efefef, #dcdcdc 55%, #cbcbcb); margin-right: 1px; padding-bottom: 2px; }
.group { display: flex; flex-direction: column; background: linear-gradient(#f2f2f2, #ebebeb); border-right: 1px solid #999; }
.g-nodes { width: 338px; }
.g-elems { width: 564px; }
.tools { flex: 1; display: flex; align-items: stretch; }
.g-elems .tools { padding-left: 3px; }
.cap { height: 16px; background: linear-gradient(#9d9d9d, #ababab); text-align: center; line-height: 14px; color: #4a4a4a; }
.big { flex-direction: column; justify-content: flex-start; padding-top: 6px; line-height: 11px; }
.big svg { width: 26px; height: 26px; margin-bottom: 3px; }
.rs { width: 5px; margin: 8px 0 6px; background: linear-gradient(90deg, transparent 2px, #d6d6d6 2px, #d6d6d6 3px, transparent 3px); }
.w25 { width: 25px; } .w30 { width: 30px; } .w33 { width: 33px; } .w36 { width: 36px; } .w38 { width: 38px; }
.w46 { width: 46px; } .w48 { width: 48px; } .w54 { width: 54px; } .w58 { width: 58px; } .w60 { width: 60px; } .w72 { width: 72px; }
.col { display: flex; flex-direction: column; padding: 6px 0 0 4px; }
.col.flush { padding-left: 0; }
.col button { height: 16px; justify-content: flex-start; gap: 3px; }
.col svg { width: 14px; height: 14px; }

/* icon toolbar */
.toolbar { height: 21px; display: flex; background: #19191b; border-top: 1px solid #000; }
.bar { display: flex; align-items: center; background: #ececec; height: 20px; border-radius: 1px; }
.bar:first-child { padding: 0 3px 0 5px; }
.bar:last-child { padding-right: 1px; }
.bar button { width: 18px; height: 18px; }
.bar button svg { width: 14px; height: 14px; }
.bar .sel { background: #fff; border: 1px solid #a9bede; }
.bar .mid { margin: 0 2px; }
.sep { width: 6px; height: 12px; background: linear-gradient(90deg, transparent 2px, #555 2px, #555 3px, transparent 3px); }
.grip { width: 4px; height: 12px; margin: 0 2px; background: repeating-linear-gradient(#999 0 1px, transparent 1px 3px) no-repeat 1px 0 / 1px 100%; }
.car { width: 10px; display: flex; justify-content: center; }
.car::after, .combo::after { content: ""; border: 3px solid transparent; border-top-color: #222; border-bottom: 0; }
.car.dim::after { border-top-color: #888; }
.combo { display: flex; align-items: center; position: relative; }
.combo::after { position: absolute; right: 3px; pointer-events: none; }
.combo select { appearance: none; width: 94px; height: 16px; background: linear-gradient(90deg, #fff calc(100% - 11px), #e6e6e6 calc(100% - 11px)); padding: 0 11px 0 3px; }

/* work area */
.work { flex: 1; display: flex; background: #17181b; min-height: 0; }
.left { width: 208px; background: #111214; display: flex; flex-direction: column; margin-right: 4px; color: #c6c6c6; }
.title { height: 18px; background: #2a2c35; display: flex; align-items: center; color: #c9c9c9; padding: 0 4px 0 1px; gap: 6px; }
.title span { flex: 1; }
.title svg { width: 8px; height: 8px; color: #eee; }
.ltabs { height: 20px; display: flex; align-items: flex-end; border-right: 4px solid #1f2b3c; }
.ltabs button { padding: 0 5px; height: 16px; }
.ltabs .on { background: #ececee; color: #333; }
.treebox { flex: 1; display: flex; flex-direction: column; background: #fff9f0; border-right: 4px solid #1f2b3c; border-bottom: 3px solid #1f2b3c; border-left: 1px solid #777; min-height: 0; }
.treewrap { flex: 1; overflow: hidden; color: #333; font: 9px/13px Roboto, "Liberation Sans", sans-serif; }
.tree, .tree ul { list-style: none; margin: 0; padding: 0; }
.tree ul { padding-left: 16px; }
.tree li { position: relative; }
.tree li::before { content: ""; position: absolute; left: 6px; top: 0; bottom: 0; border-left: 1px solid #cfcac2; }
.tree li:last-child::before { bottom: auto; height: 7px; }
.row { display: flex; align-items: center; height: 13px; padding-left: 16px; position: relative; white-space: nowrap; }
.row::before { content: ""; position: absolute; left: 7px; width: 8px; top: 6px; border-top: 1px solid #cfcac2; }
.row.root { padding-left: 0; }
.root::before { display: none; }
.row svg { width: 14px; height: 12px; }
.row span { margin-left: 3px; }
.tg { position: absolute; left: 3px; top: 3px; width: 7px; height: 7px; border: 1px solid #999; background: linear-gradient(#555, #555) no-repeat 1px 2px / 3px 1px #fffaf2; }
.blue span { color: #2b2bd4; }
.hl span { background: #f0edf0; }
.hscroll { height: 13px; display: flex; background: #f8f6f8; color: #000; }
.hscroll button { width: 12px; background: #f1f1f3; }
.hscroll svg { width: 6px; height: 7px; }
.thumb { width: 131px; background: #ebe9ed; border-right: 1px solid #777; border-left: 1px solid #bbb; }
.track { flex: 1; }
.btabs { height: 20px; display: flex; align-items: center; }
.btabs button { height: 16px; padding: 0 3px; }
.btabs .on { background: #e4e4e6; color: #444; margin-right: 6px; }

.center { flex: 1; min-width: 0; display: flex; flex-direction: column; padding-top: 2px; }
.view { flex: 1; min-height: 0; background: #fff; border: 2px solid #8b8b8b; border-width: 2px 1px 1px 2px; margin: 0 1px; position: relative; overflow: hidden; }
.model { width: 100%; height: 100%; }
.stage { position: absolute; left: 11px; top: 10px; display: flex; align-items: center; }
.stage svg { width: 14px; height: 14px; }
.stage .sep { margin: 0 2px; }
.base select { width: 121px; font-size: 9px; background: linear-gradient(90deg, #fff calc(100% - 11px), #e2e2e2 calc(100% - 11px)); padding-left: 6px; }
.vtabs { height: 20px; background: #e9e7ea; border-top: 2px solid #000; border-bottom: 1px solid #e9e7ea; display: flex; padding: 0 7px 0 4px; margin-right: 1px; }
.vtabs > button > svg:not(.shape) { width: 7px; height: 8px; color: #555; }
.vtab { position: relative; margin-left: 3px; padding: 0 10px; font: bold 10px/12px "Liberation Sans", Arial, sans-serif; color: #555; }
.shape { position: absolute; inset: 0; width: 100%; height: 100%; }
.shape + span { position: relative; }
.msgt { margin: 2px 1px 0 0; height: 19px; padding: 0 4px 0 3px; background: #2a2c36; }
.msg { margin-right: 1px; background: #fff9f0; border-top: 3px solid #8c8a8a; border-left: 2px solid #888; }
.log { height: 72px; border-bottom: 2px solid #8d8b8b; display: flex; justify-content: flex-end; }
.vscroll { width: 14px; background: #efedef; display: flex; flex-direction: column; justify-content: space-between; align-items: center; padding: 4px 0 6px; color: #888; }
.vscroll svg { width: 6px; height: 6px; }
.cmd { height: 15px; display: flex; align-items: center; padding-left: 2px; }
.cmd input { flex: 1; height: 12px; outline: 0; }
.mtabs { height: 16px; background: #f0eef0; display: flex; font: 9px/11px "Liberation Sans", Arial, sans-serif; border-bottom: 2px solid #aaa; }
.nav { display: flex; color: #999; }
.nav button { width: 14px; border: 1px solid #aaa; border-color: #ddd #999 #999 #ddd; }
.nav svg { width: 8px; height: 8px; }
.mt { position: relative; padding: 0 9px; }
.mt.on { font-weight: bold; margin-left: 1px; z-index: 1; padding: 0 10px 0 8px; }
.mt:not(.on) { margin-left: -1px; padding: 0 12px; }
.rest { flex: 540; border-top: 1px solid #333; border-right: 2px solid #444; margin-left: -1px; }
.hs2 { flex: 420; max-width: 346px; margin-left: 3px; display: flex; background: #f6f3f6; color: #000; }
.hs2 button { width: 13px; border: 1px solid #999; border-color: #fff #888 #888 #888; }
.hs2 svg { width: 6px; height: 7px; }
.th2 { width: 13px; border: 1px solid #999; border-color: #fff #888 #888 #fff; background: #eceaec; }

.right { width: 17px; padding: 79px 1px 0 0; overflow: hidden; }
.vbar { background: #ececee; padding: 2px 0 0 1px; border-radius: 3px 0 0 3px; overflow: hidden; display: flex; flex-direction: column; }
.vbar button { height: 18px; justify-content: flex-start; padding-left: 2px; }
.vbar svg { width: 14px; height: 14px; }
.hgrip { height: 6px; margin-right: 1px; background: repeating-linear-gradient(90deg, #999 0 2px, transparent 2px 4px) no-repeat 2px 2px / 100% 1px; }
.hsep { height: 6px; background: linear-gradient(#777, #777) no-repeat 2px 2px / 100% 1px; }

/* status bar */
.status { height: 17px; display: flex; align-items: stretch; background: linear-gradient(#3a4658, #29364a 35%, #1c2532); color: #d5d8dc; padding-right: 18px; }
.status > span { line-height: 18px; }
.hint { flex: 1; padding-left: 1px; }
.cell { border-left: 1px solid #141b26; }
.c1 { width: 89px; padding-left: 9px; }
.c2 { width: 130px; padding-left: 3px; }
.units { display: flex; align-items: center; background: #ececee; color: #222; font: 9px/12px "Liberation Sans", Arial, sans-serif; padding: 0 3px 0 1px; gap: 3px; }
.u select { width: 39px; height: 15px; border: 1px solid #666; background: #fff; padding: 0 11px 0 1px; }
.u.n select { width: 34px; padding-right: 13px; }
.u::after { right: 4px; }
.usep { width: 1px; align-self: stretch; background: #222; }
.ub { width: 16px; height: 15px; border: 1px solid #aaa; border-color: #fff #999 #999 #fff; }
.ub svg { width: 12px; height: 12px; }
.q { width: 15px; height: 14px; border: 1px solid #49a9b4; background: #f7ffff; font-weight: bold; font-size: 10px; margin: 0 0 0 3px; }
.cy { width: 14px; height: 14px; background: #0ee6fa; }
.spin { display: flex; height: 15px; border: 1px solid #777; background: #fff; }
.spin.off { background: #eee; color: #999; border-color: #999 #eee #eee #999; margin-left: -2px; }
.spin input { width: 12px; text-align: center; }
.spin.two input { width: 25px; }
.spin span { width: 12px; display: flex; flex-direction: column; justify-content: space-around; align-items: center; background: #ececec; }
.spin svg { width: 5px; height: 5px; }
.slash { padding: 0 3px; }
```
